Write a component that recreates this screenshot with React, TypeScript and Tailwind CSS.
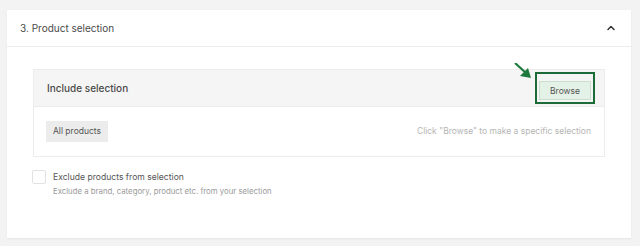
import { ChevronUp } from "lucide-react";

export default function App() {
  return (
    <div className="min-h-[246px] w-[640px] bg-[#f3f3f3] px-[7px] pt-[10px] font-['Inter',sans-serif]">
      <div className="w-[624px] bg-white shadow-[0_1px_2px_rgba(0,0,0,0.06)]">
        {/* header */}
        <div className="flex h-[37px] items-center justify-between border-b border-[#ececec] pl-[13px] pr-[14px]">
          <span className="text-[10px] text-[#4a4a4a]">3. Product selection</span>
          <ChevronUp className="h-[12px] w-[12px] text-[#333]" strokeWidth={3} />
        </div>

        <div className="px-[26px] pt-[22px] pb-[40px]">
          {/* include box */}
          <div className="border border-[#ececec]">
            <div className="relative flex h-[37px] items-center justify-between border-b border-[#ececec] bg-[#f5f5f5] pl-[13px] pr-[9px]">
              <span className="text-[10px] font-medium text-[#4a4a4a]">Include selection</span>
              <div className="border-2 border-[#1d6b39] p-[2px]">
                <button className="h-[19px] w-[52px] border border-[#c9dfcd] bg-[#e4f1e7] text-[8.5px] text-[#555]">
                  Browse
                </button>
              </div>
              <svg
                className="absolute left-[480px] top-[-7px]"
                width="18"
                height="16"
                viewBox="0 0 18 16"
              >
                <line x1="1" y1="0" x2="12" y2="10" stroke="#1d7a3c" strokeWidth="2.2" />
                <polygon points="17,15 6,13 14,5" fill="#1d7a3c" />
              </svg>
            </div>
            <div className="flex h-[49px] items-center justify-between pl-[12px] pr-[13px]">
              <span className="bg-[#ececec] px-[7px] py-[4px] text-[8.5px] text-[#555]">All products</span>
              <span className="text-[8.5px] text-[#b5b5b5]">Click "Browse" to make a specific selection</span>
            </div>
          </div>

          {/* exclude */}
          <div className="mt-[13px] flex items-start gap-[7px] -ml-[1px]">
            <div className="h-[14px] w-[14px] rounded-[2px] border border-[#e2e2e2] bg-white" />
            <div className="flex flex-col">
              <span className="text-[8.6px] leading-[14px] text-[#555]">Exclude products from selection</span>
              <span className="text-[7.8px] leading-[14px] text-[#9a9a9a]">
                Exclude a brand, category, product etc. from your selection
              </span>
            </div>
          </div>
        </div>
      </div>
    </div>
  );
}
